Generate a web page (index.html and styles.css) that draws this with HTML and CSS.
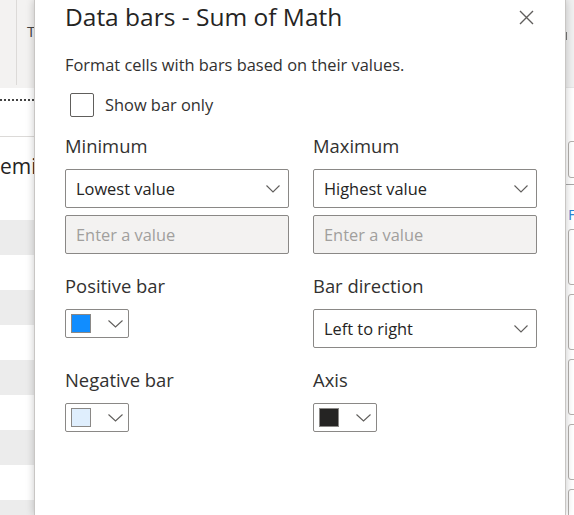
FILE: index.html
```html
<!DOCTYPE html>
<html>
<head>
<meta charset="utf-8">
<link rel="stylesheet" href="styles.css">
</head>
<body>
<div class="screen">
  <div class="bg-left">
    <div class="ribbon"><div class="ribbon-col"></div><span class="ribbon-t">T</span></div>
    <div class="dotted"></div>
    <div class="rule"></div>
    <div class="tab">emi</div>
    <div class="tab-line"></div>
    <div class="rows">
      <div class="row alt"></div><div class="row"></div>
      <div class="row alt"></div><div class="row"></div>
      <div class="row alt"></div><div class="row"></div>
      <div class="row alt"></div><div class="row"></div>
      <div class="row alt"></div>
    </div>
  </div>

  <div class="dialog">
    <div class="header">
      <h1 class="title">Data bars - Sum of Math</h1>
      <span class="close">
        <svg width="15" height="15" viewBox="0 0 15 15"><path d="M1 1L14 14M14 1L1 14" stroke="#605e5c" stroke-width="1.4" fill="none"/></svg>
      </span>
    </div>
    <div class="desc">Format cells with bars based on their values.</div>
    <div class="check"><span class="checkbox"></span><span class="check-text">Show bar only</span></div>

    <div class="grid">
      <div class="field">
        <div class="label">Minimum</div>
        <div class="select"><span>Lowest value</span><svg class="chev" width="14" height="8" viewBox="0 0 14 8"><path d="M0.5 0.5L7 7L13.5 0.5" stroke="#605e5c" stroke-width="1.1" fill="none"/></svg></div>
        <div class="input">Enter a value</div>
      </div>
      <div class="field">
        <div class="label">Maximum</div>
        <div class="select"><span>Highest value</span><svg class="chev" width="14" height="8" viewBox="0 0 14 8"><path d="M0.5 0.5L7 7L13.5 0.5" stroke="#605e5c" stroke-width="1.1" fill="none"/></svg></div>
        <div class="input">Enter a value</div>
      </div>

      <div class="field">
        <div class="label">Positive bar</div>
        <div class="swatch-btn"><span class="swatch pos"></span><svg class="chev-s" width="15" height="8" viewBox="0 0 15 8"><path d="M0.5 0.5L7.5 7L14.5 0.5" stroke="#605e5c" stroke-width="1.1" fill="none"/></svg></div>
      </div>
      <div class="field">
        <div class="label">Bar direction</div>
        <div class="select"><span>Left to right</span><svg class="chev" width="14" height="8" viewBox="0 0 14 8"><path d="M0.5 0.5L7 7L13.5 0.5" stroke="#605e5c" stroke-width="1.1" fill="none"/></svg></div>
      </div>

      <div class="field">
        <div class="label">Negative bar</div>
        <div class="swatch-btn"><span class="swatch neg"></span><svg class="chev-s" width="15" height="8" viewBox="0 0 15 8"><path d="M0.5 0.5L7.5 7L14.5 0.5" stroke="#605e5c" stroke-width="1.1" fill="none"/></svg></div>
      </div>
      <div class="field">
        <div class="label">Axis</div>
        <div class="swatch-btn"><span class="swatch axis"></span><svg class="chev-s" width="15" height="8" viewBox="0 0 15 8"><path d="M0.5 0.5L7.5 7L14.5 0.5" stroke="#605e5c" stroke-width="1.1" fill="none"/></svg></div>
      </div>
    </div>
  </div>

  <div class="bg-right">
    <div class="r-ribbon"><span class="r-tick"></span></div>
    <div class="r-orange"></div>
    <div class="r-box r-box1"></div>
    <div class="r-rule"></div>
    <div class="r-f">F</div>
    <div class="r-box r-big"></div>
    <div class="r-box r-big"></div>
    <div class="r-box r-big"></div>
    <div class="r-box r-big"></div>
    <div class="r-box r-big"></div>
  </div>
</div>
</body>
</html>
```

FILE: styles.css
```css
* { box-sizing: border-box; }
html, body { margin: 0; padding: 0; }
body {
  width: 574px;
  height: 515px;
  overflow: hidden;
  background: #fff;
  font-family: "Open Sans", "Noto Sans", sans-serif;
  color: #252423;
}
.screen {
  display: flex;
  width: 574px;
  height: 515px;
  overflow: hidden;
}

/* left background app */
.bg-left {
  width: 34px;
  flex: none;
  overflow: hidden;
  display: flex;
  flex-direction: column;
  background: #fff;
}
.ribbon {
  height: 88px;
  flex: none;
  background: #f3f2f1;
  display: flex;
  align-items: flex-start;
}
.ribbon-col {
  width: 17px;
  height: 85px;
  border-right: 1px solid #dcdad8;
  flex: none;
}
.ribbon-t {
  margin-left: 10px;
  margin-top: 22px;
  font-size: 15px;
  line-height: 18px;
  color: #444;
}
.dotted {
  margin-top: 11px;
  height: 0;
  border-top: 2px dotted #444;
}
.rule {
  margin-top: 35px;
  border-top: 1px solid #dcdad8;
}
.tab {
  margin-top: 14px;
  font-size: 21px;
  line-height: 30px;
  color: #252423;
  white-space: nowrap;
}
.tab-line {
  margin-top: 8px;
  height: 2px;
  background: #2b88d8;
}
.rows {
  margin-top: 31px;
  display: flex;
  flex-direction: column;
}
.row {
  height: 35px;
  flex: none;
  background: #fff;
}
.row.alt { background: #ececec; }

/* dialog */
.dialog {
  width: 532px;
  flex: none;
  height: 515px;
  background: #fff;
  padding: 0 30px;
  position: relative;
  z-index: 1;
  box-shadow: 0 0 8px rgba(0,0,0,0.22);
  border-left: 1px solid #c8c6c4;
  border-right: 1px solid #c8c6c4;
}
.header {
  display: flex;
  justify-content: space-between;
  align-items: flex-start;
  height: 36px;
}
.title {
  margin: 0;
  font-size: 24.5px;
  line-height: 34px;
  font-weight: 500;
  color: #252423;
}
.close {
  margin-top: 10px;
  margin-right: 1px;
  display: block;
  width: 15px;
  height: 15px;
}
.close svg { display: block; }
.desc {
  margin-top: 19px;
  font-size: 16.4px;
  line-height: 20px;
  color: #323130;
  white-space: nowrap;
}
.check {
  margin-top: 18px;
  margin-left: 5px;
  display: flex;
  align-items: center;
  height: 24px;
}
.checkbox {
  width: 24px;
  height: 24px;
  border: 1px solid #605e5c;
  border-radius: 2px;
  background: #fff;
}
.check-text {
  margin-left: 11px;
  font-size: 16.4px;
  line-height: 22px;
  color: #323130;
}

.grid {
  margin-top: 17px;
  display: grid;
  grid-template-columns: 224px 224px;
  column-gap: 24px;
  row-gap: 20px;
}
.field {
  display: flex;
  flex-direction: column;
  align-items: flex-start;
}
.label {
  font-size: 18.4px;
  line-height: 24px;
  color: #323130;
  margin-bottom: 11px;
}
.select {
  width: 224px;
  height: 39px;
  border: 1px solid #8a8886;
  border-radius: 2px;
  background: #fff;
  display: flex;
  align-items: center;
  justify-content: space-between;
  padding: 0 8px 0 10px;
  font-size: 16.4px;
  color: #252423;
}
.chev { display: block; margin-top: 1px; }
.input {
  margin-top: 7px;
  width: 224px;
  height: 39px;
  border: 1px solid #8a8886;
  border-radius: 2px;
  background: #f3f2f1;
  display: flex;
  align-items: center;
  padding: 0 10px;
  font-size: 16.4px;
  color: #a19f9d;
}
.swatch-btn {
  width: 64px;
  height: 29px;
  border: 1px solid #8a8886;
  border-radius: 2px;
  background: #fff;
  display: flex;
  align-items: center;
  padding-left: 5px;
}
.swatch {
  width: 20px;
  height: 19px;
  border: 1px solid #8a8886;
  flex: none;
}
.swatch.pos { background: #118dff; }
.swatch.neg { background: #dfeefd; }
.swatch.axis { background: #252423; }
.chev-s { display: block; margin-left: 17px; }

/* right background */
.bg-right {
  width: 8px;
  flex: none;
  overflow: hidden;
  display: flex;
  flex-direction: column;
  background: #fff;
}
.r-ribbon {
  height: 88px;
  flex: none;
  background: #f0f0f0;
  border-bottom: 1px solid #e6e6e6;
}
.r-tick {
  display: block;
  margin-top: 32px;
  width: 1px;
  height: 8px;
  background: #777;
}
.r-orange {
  margin-top: 13px;
  margin-left: 5px;
  width: 3px;
  height: 3px;
  background: #c27c2c;
}
.r-box {
  margin-left: 2px;
  width: 20px;
  border: 1px solid #b3b0ad;
  border-radius: 3px;
  flex: none;
}
.r-box1 {
  margin-top: 40px;
  height: 37px;
}
.r-rule {
  margin-top: 6px;
  border-top: 1px solid #a8a8a8;
}
.r-f {
  margin-top: 22px;
  margin-left: 2px;
  font-size: 15px;
  line-height: 14px;
  color: #2b88d8;
}
.r-big {
  height: 56px;
  margin-top: 9px;
}
.r-big:nth-of-type(6) { margin-top: 8px; }
```
